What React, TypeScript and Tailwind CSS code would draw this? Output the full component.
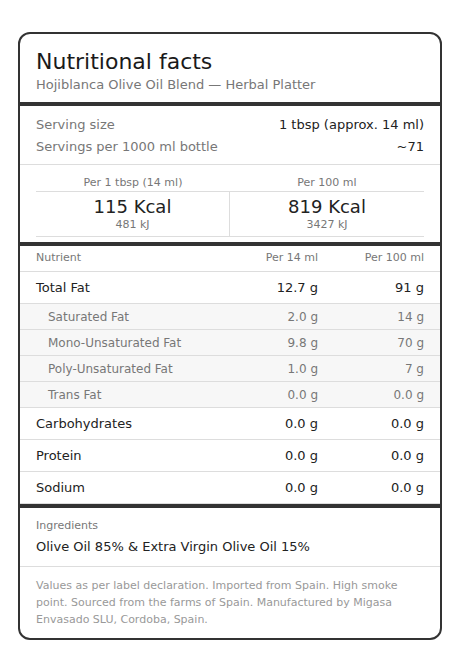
type Row = {
  name: string;
  perServing: string;
  per100: string;
  sub?: boolean;
};

const rows: Row[] = [
  { name: "Total Fat", perServing: "12.7 g", per100: "91 g" },
  { name: "Saturated Fat", perServing: "2.0 g", per100: "14 g", sub: true },
  { name: "Mono-Unsaturated Fat", perServing: "9.8 g", per100: "70 g", sub: true },
  { name: "Poly-Unsaturated Fat", perServing: "1.0 g", per100: "7 g", sub: true },
  { name: "Trans Fat", perServing: "0.0 g", per100: "0.0 g", sub: true },
  { name: "Carbohydrates", perServing: "0.0 g", per100: "0.0 g" },
  { name: "Protein", perServing: "0.0 g", per100: "0.0 g" },
  { name: "Sodium", perServing: "0.0 g", per100: "0.0 g" },
];

export default function App() {
  return (
    <div className="min-h-screen bg-white px-[18px] pt-8 font-['DejaVu_Sans',sans-serif]">
      <div className="overflow-hidden rounded-xl border-2 border-[#333]">
        {/* Header */}
        <div className="px-4 pt-[15px] pb-[8px]">
          <h1 className="text-[22px] leading-[26px] text-[#1a1a1a]">
            Nutritional facts
          </h1>
          <p className="mt-[1px] text-[13px] leading-[18px] text-[#777]">
            Hojiblanca Olive Oil Blend — Herbal Platter
          </p>
        </div>
        <div className="h-1 bg-[#333]" />

        {/* Serving */}
        <div className="border-b border-[#ddd] px-4 pt-[8px] pb-[6px] text-[13px] leading-[22px]">
          <div className="flex justify-between">
            <span className="text-[#777]">Serving size</span>
            <span className="text-[#222]">1 tbsp (approx. 14 ml)</span>
          </div>
          <div className="flex justify-between">
            <span className="text-[#777]">Servings per 1000 ml bottle</span>
            <span className="text-[#222]">~71</span>
          </div>
        </div>

        {/* Energy */}
        <div className="px-4 pt-[11px] pb-[5px]">
          <div className="grid grid-cols-2 border-b border-[#ddd] pb-[1px] text-center text-[11px] leading-[14px] text-[#777]">
            <span>Per 1 tbsp (14 ml)</span>
            <span>Per 100 ml</span>
          </div>
          <div className="grid grid-cols-2 divide-x divide-[#ddd] border-b border-[#ddd] text-center">
            <div className="py-1">
              <div className="text-[18px] leading-[22px] text-[#222]">115 Kcal</div>
              <div className="text-[11px] leading-[14px] text-[#777]">481 kJ</div>
            </div>
            <div className="py-1">
              <div className="text-[18px] leading-[22px] text-[#222]">819 Kcal</div>
              <div className="text-[11px] leading-[14px] text-[#777]">3427 kJ</div>
            </div>
          </div>
        </div>
        <div className="h-1 bg-[#333]" />

        {/* Nutrient table */}
        <div className="grid h-[26px] grid-cols-[1fr_90px_90px] items-center gap-4 border-b border-[#ddd] px-4 text-[11px] text-[#777]">
          <span>Nutrient</span>
          <span className="text-right">Per 14 ml</span>
          <span className="text-right">Per 100 ml</span>
        </div>
        {rows.map((row) =>
          row.sub ? (
            <div
              key={row.name}
              className="grid h-[26px] grid-cols-[1fr_90px_90px] items-center gap-4 border-b border-[#ddd] bg-[#f7f7f7] pr-4 pl-7 text-[12px] text-[#777]"
            >
              <span>{row.name}</span>
              <span className="text-right">{row.perServing}</span>
              <span className="text-right">{row.per100}</span>
            </div>
          ) : (
            <div
              key={row.name}
              className="grid h-8 grid-cols-[1fr_90px_90px] items-center gap-4 border-b border-[#ddd] px-4 text-[13px] text-[#222]"
            >
              <span>{row.name}</span>
              <span className="text-right">{row.perServing}</span>
              <span className="text-right">{row.per100}</span>
            </div>
          )
        )}
        <div className="h-1 bg-[#333]" />

        {/* Ingredients */}
        <div className="border-b border-[#ddd] px-4 pt-[11px] pb-[10px]">
          <div className="mb-[5px] text-[11px] leading-[14px] text-[#777]">
            Ingredients
          </div>
          <div className="text-[13px] leading-[18px] text-[#222]">
            Olive Oil 85% &amp; Extra Virgin Olive Oil 15%
          </div>
        </div>

        {/* Footer */}
        <p className="px-4 pt-[10px] pb-[10px] text-[11px] leading-[17px] text-[#999]">
          Values as per label declaration. Imported from Spain. High smoke
          point. Sourced from the farms of Spain. Manufactured by Migasa
          Envasado SLU, Cordoba, Spain.
        </p>
      </div>
    </div>
  );
}
